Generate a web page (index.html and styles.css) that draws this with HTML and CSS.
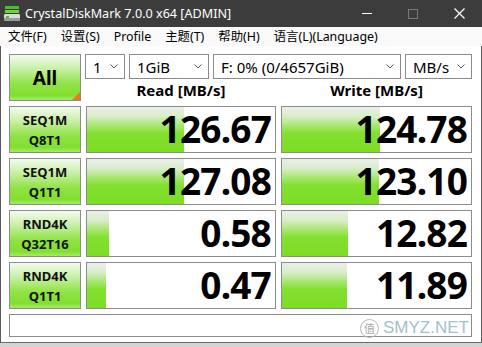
FILE: index.html
```html
<!DOCTYPE html>
<html lang="zh-CN">
<head>
	<meta charset="UTF-8">
	<meta name="viewport" content="width=device-width, initial-scale=1.0">
	<title>CrystalDiskMark 7.0.0 x64 [ADMIN]</title>
	<link rel="stylesheet" href="styles.css">
</head>
<body>
	<div class="window">
		<div class="titlebar">
			<svg class="app-icon" width="16" height="16" viewBox="0 0 16 16">
				<rect x="1" y="0" width="14" height="3" fill="#4cc02a"/>
				<rect x="1" y="4" width="14" height="3" fill="#6fd43c"/>
				<rect x="0" y="8" width="16" height="7" rx="1" fill="#d9d9d9"/>
				<rect x="0" y="12" width="16" height="3" fill="#9a9a9a"/>
				<rect x="2" y="10" width="3" height="2" fill="#4cc02a"/>
			</svg>
			<span class="title">CrystalDiskMark 7.0.0 x64 [ADMIN]</span>
			<div class="caption-btns">
				<span class="cap"><span class="cap-min"></span></span>
				<span class="cap"><span class="cap-max"></span></span>
				<span class="cap">
					<svg class="cap-close" width="11" height="11" viewBox="0 0 11 11"><path d="M0.5 0.5L10.5 10.5M10.5 0.5L0.5 10.5" stroke="#ffffff" stroke-width="1.2" fill="none"/></svg>
				</span>
			</div>
		</div>
		<ul class="menubar">
			<li>文件(F)</li>
			<li>设置(S)</li>
			<li>Profile</li>
			<li>主题(T)</li>
			<li>帮助(H)</li>
			<li>语言(L)(Language)</li>
		</ul>
		<div class="client">
			<div class="board">
				<div class="btn-all">All<span class="corner"></span></div>
				<div class="selects">
					<div class="select w-count"><span>1</span><svg class="chev" width="8" height="5" viewBox="0 0 8 5"><path d="M0.5 0.5l3.5 3.5 3.5-3.5" fill="none" stroke="#555"/></svg></div>
					<div class="select w-size"><span>1GiB</span><svg class="chev" width="8" height="5" viewBox="0 0 8 5"><path d="M0.5 0.5l3.5 3.5 3.5-3.5" fill="none" stroke="#555"/></svg></div>
					<div class="select w-drive"><span>F: 0% (0/4657GiB)</span><svg class="chev" width="8" height="5" viewBox="0 0 8 5"><path d="M0.5 0.5l3.5 3.5 3.5-3.5" fill="none" stroke="#555"/></svg></div>
					<div class="select w-unit"><span>MB/s</span><svg class="chev" width="8" height="5" viewBox="0 0 8 5"><path d="M0.5 0.5l3.5 3.5 3.5-3.5" fill="none" stroke="#555"/></svg></div>
				</div>
				<div class="head">Read [MB/s]</div>
				<div class="head">Write [MB/s]</div>

				<div class="test">SEQ1M<br>Q8T1</div>
				<div class="meter"><div class="bar" style="width:97px"></div><span class="value">126.67</span></div>
				<div class="meter"><div class="bar" style="width:98px"></div><span class="value">124.78</span></div>

				<div class="test">SEQ1M<br>Q1T1</div>
				<div class="meter"><div class="bar" style="width:97px"></div><span class="value">127.08</span></div>
				<div class="meter"><div class="bar" style="width:97px"></div><span class="value">123.10</span></div>

				<div class="test">RND4K<br>Q32T16</div>
				<div class="meter"><div class="bar" style="width:22px"></div><span class="value">0.58</span></div>
				<div class="meter"><div class="bar" style="width:66px"></div><span class="value">12.82</span></div>

				<div class="test">RND4K<br>Q1T1</div>
				<div class="meter"><div class="bar" style="width:19px"></div><span class="value">0.47</span></div>
				<div class="meter"><div class="bar" style="width:65px"></div><span class="value">11.89</span></div>

				<div class="comment"></div>
			</div>
		</div>
		<div class="watermark"><span class="wm-icon">值</span>SMYZ.NET</div>
	</div>
</body>
</html>
```

FILE: styles.css
```css
*{ box-sizing: border-box; }
html, body{ margin: 0; padding: 0; }
body{ width: 482px; height: 347px; overflow: hidden; background: #fff; }

.window{
	position: relative; width: 482px; height: 347px;
	font-family: "Noto Sans", "Noto Sans CJK SC", sans-serif; color: #000;
	background: #d4d4d4;
}

/* title bar */
.titlebar{
	height: 27px; background: #3c3c3c; color: #fff;
	display: flex; align-items: center; padding-left: 4px;
}
.app-icon{ flex: none; margin-right: 5px; display: block; }
.title{ font-size: 12.6px; white-space: nowrap; }
.caption-btns{ margin-left: auto; display: flex; height: 27px; flex: none; }
.cap{ width: 46px; height: 27px; display: flex; align-items: center; justify-content: center; }
.cap-min{ display: block; width: 10px; height: 1px; background: #fff; }
.cap-max{ display: block; width: 10px; height: 10px; border: 1px solid #7a7a7a; }
.cap-close{ display: block; }

/* menu */
.menubar{
	list-style: none; margin: 0; padding: 0 0 0 8px; height: 19px;
	background: #f9f9f9; display: flex; gap: 14px;
	font-size: 12.4px; line-height: 19px;
}

/* client area */
.client{
	height: 297px; background: #fff; padding: 8px 0 0 9px;
	border-left: 1px solid #5a5a5a; border-right: 1px solid #5a5a5a;
	border-bottom: 1px solid #6a6a6a; margin: 0;
}
.board{
	display: grid; grid-template-columns: 72px 190px 191px;
	grid-template-rows: 25px 17px repeat(4, 47px) 23px;
	gap: 5px; margin-left: -1px;
}

.btn-all, .test{
	border: 1px solid #8c8c8c;
	background: linear-gradient(to bottom, #f3fbee 0%, #c9f0a8 30%, #8fe244 65%, #82df2e 90%, #a6ea6a 100%);
	display: flex; align-items: center; justify-content: center; text-align: center;
	font-weight: bold;
}
.btn-all{ grid-row: 1 / 3; position: relative; font-size: 19px; }
.corner{
	position: absolute; right: 0; bottom: 0; width: 0; height: 0;
	border-style: solid; border-width: 0 0 8px 8px;
	border-color: transparent transparent #e8782c transparent;
}
.test{ font-size: 13px; line-height: 20px; color: #111; }

.selects{ grid-column: 2 / 4; display: flex; gap: 4px; margin-left: -1px; }
.select{
	height: 25px; border: 1px solid #8a8a8a; background: #fff;
	display: flex; align-items: center; padding: 0 6px 0 7px;
	font-size: 15px;
}
.select span{ flex: 1; white-space: nowrap; }
.chev{ flex: none; }
.w-count{ width: 40px; }
.w-size{ width: 80px; }
.w-drive{ width: 188px; }
.w-unit{ width: 67px; }

.head{
	font-size: 15px; font-weight: bold; text-align: center;
	line-height: 17px; margin-top: -2px;
}

.meter{
	position: relative; border: 1px solid #8c8c8c; background: #fff;
	display: flex; align-items: center; justify-content: flex-end;
	padding-right: 4px;
}
.bar{
	position: absolute; left: 0; top: 0; bottom: 0;
	background: linear-gradient(to bottom, #eceeea 0%, #d6edc6 22%, #a6e66e 42%, #84e030 58%, #7ddd26 100%);
}
.value{
	position: relative; font-size: 37px; font-weight: bold;
	line-height: 42px; letter-spacing: -0.8px; margin-top: -1px;
}

.comment{ grid-column: 1 / 4; border: 1px solid #8c8c8c; background: #fff; }

.watermark{
	position: absolute; left: 360px; top: 318px;
	font-family: "Liberation Sans", sans-serif; font-size: 17px;
	color: #9fc2cb; display: flex; align-items: center; gap: 4px;
}
.wm-icon{
	width: 19px; height: 19px; border: 1.5px solid #b5b5b5; border-radius: 50%;
	font-family: "Noto Sans CJK SC", sans-serif; font-size: 11px; color: #aaa;
	display: flex; align-items: center; justify-content: center;
}
```
